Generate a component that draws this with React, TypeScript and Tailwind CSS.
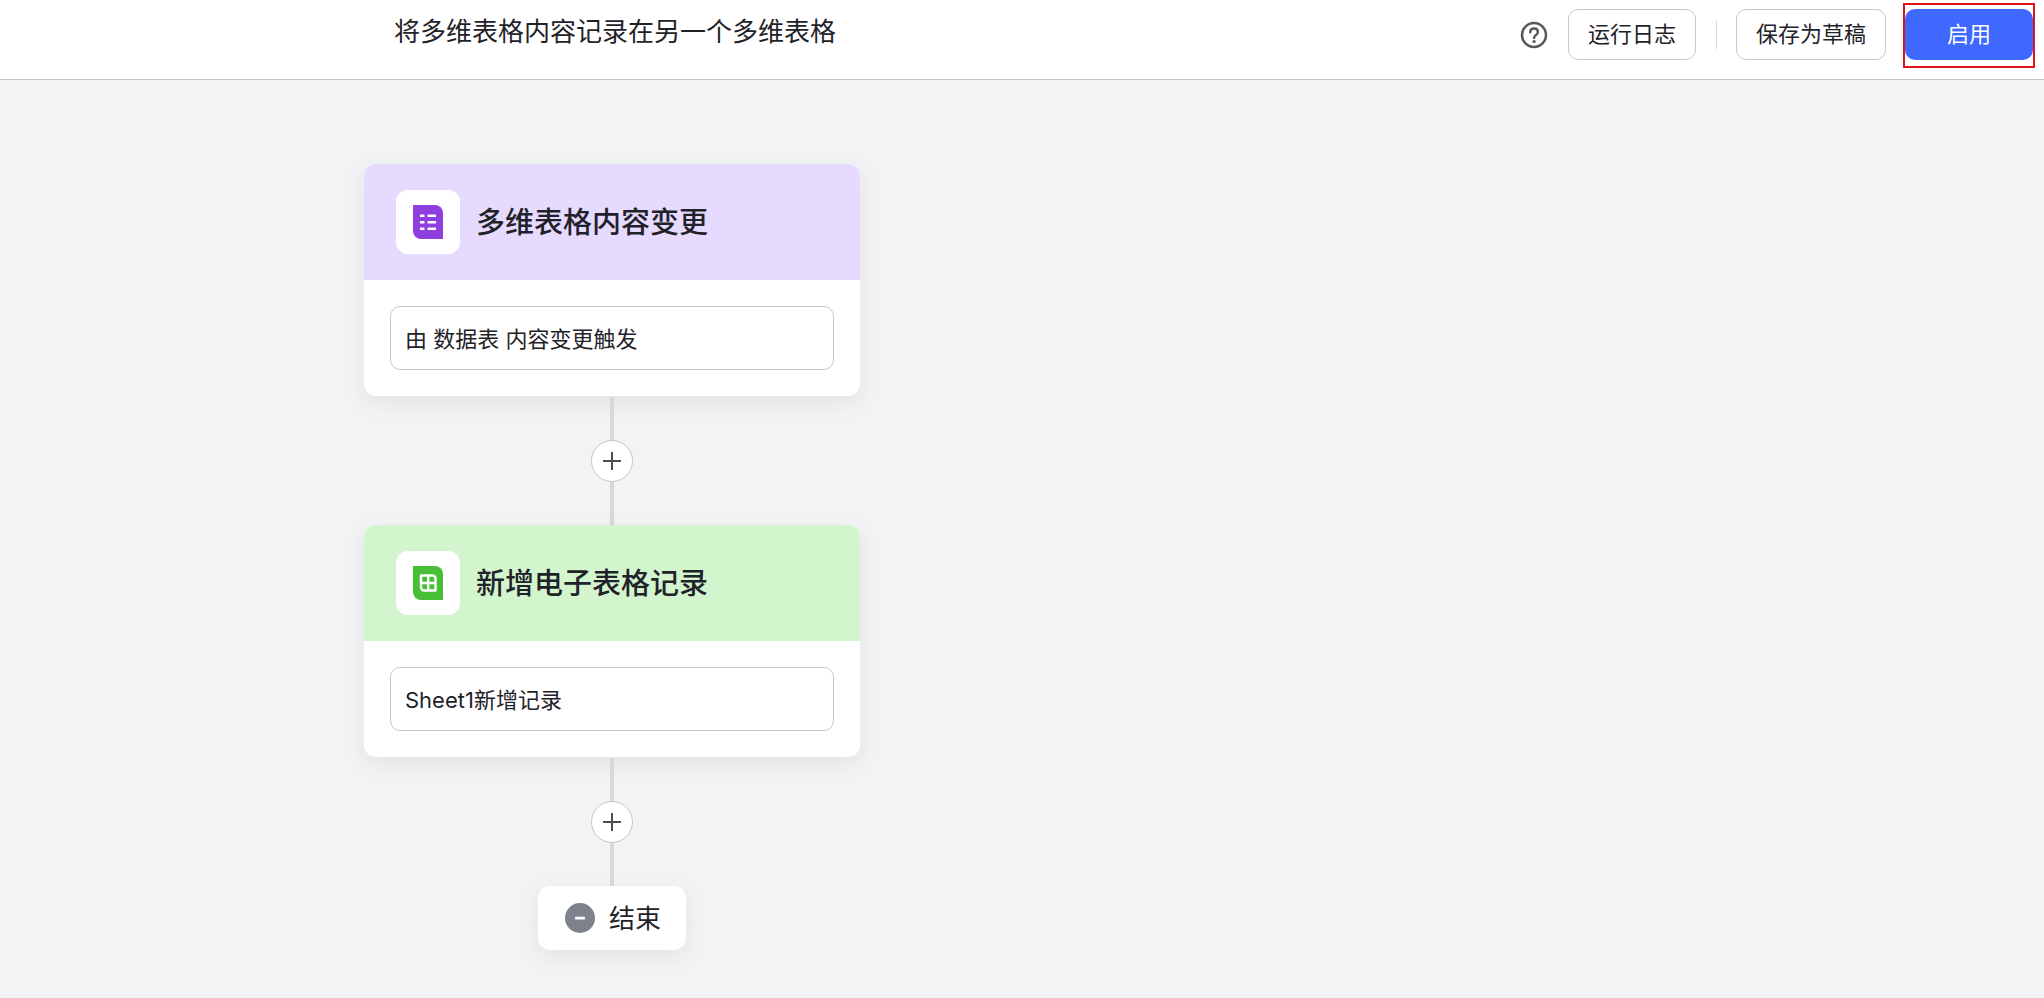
import type { ReactNode } from "react";

type FlowNodeProps = {
  title: string;
  headerClass: string;
  icon: ReactNode;
  value: string;
};

function BitableIcon() {
  return (
    <svg width="30" height="34" viewBox="0 0 30 34" aria-hidden="true">
      <path d="M0 0h22a8 8 0 0 1 8 8v26H8a8 8 0 0 1-8-8z" fill="#8f3fe0" />
      <g fill="#fff">
        <rect x="7" y="9.5" width="4.5" height="2.6" rx="0.6" />
        <rect x="14.5" y="9.5" width="8.5" height="2.6" rx="0.6" />
        <rect x="7" y="16" width="4.5" height="2.6" rx="0.6" />
        <rect x="14.5" y="16" width="8.5" height="2.6" rx="0.6" />
        <rect x="7" y="22.5" width="4.5" height="2.6" rx="0.6" />
        <rect x="14.5" y="22.5" width="8.5" height="2.6" rx="0.6" />
      </g>
    </svg>
  );
}

function SheetIcon() {
  return (
    <svg width="30" height="34" viewBox="0 0 30 34" aria-hidden="true">
      <path d="M0 0h22a8 8 0 0 1 8 8v26H8a8 8 0 0 1-8-8z" fill="#48bf36" />
      <path
        d="M8 9.5h11.5a3 3 0 0 1 3 3v12H11a3 3 0 0 1-3-3zM15.25 9.5v15M8 17h14.5"
        fill="none"
        stroke="#fff"
        strokeWidth="2.4"
        strokeLinejoin="round"
      />
    </svg>
  );
}

function HelpIcon() {
  return (
    <svg width="28" height="28" viewBox="0 0 28 28" fill="none" aria-hidden="true">
      <circle cx="14" cy="14" r="12" stroke="#55585d" strokeWidth="2.5" />
      <path
        d="M10.2 11.2c0-2.2 1.6-3.7 3.9-3.7 2.2 0 3.8 1.4 3.8 3.4 0 1.7-.9 2.5-2.2 3.4-1.1.8-1.6 1.3-1.6 2.6"
        stroke="#55585d"
        strokeWidth="2.4"
        strokeLinecap="round"
      />
      <circle cx="14.1" cy="20.5" r="1.6" fill="#55585d" />
    </svg>
  );
}

function FlowNode({ title, headerClass, icon, value }: FlowNodeProps) {
  return (
    <section className="w-full overflow-hidden rounded-xl bg-white shadow-[0_6px_20px_rgba(31,35,41,0.08)]">
      <header className={`flex h-[116px] items-center gap-4 px-8 ${headerClass}`}>
        <div className="flex h-16 w-16 items-center justify-center rounded-xl bg-white">
          {icon}
        </div>
        <h2 className="pt-0.5 text-[29px] leading-9 font-medium">{title}</h2>
      </header>
      <div className="p-[26px]">
        <input
          type="text"
          aria-label={title}
          defaultValue={value}
          className="block h-16 w-full rounded-[10px] border border-[#c6c7c9] bg-white px-3.5 pb-0.5 text-[22px]"
        />
      </div>
    </section>
  );
}

function Connector() {
  return (
    <div className="flex h-[129px] flex-col items-center pt-px">
      <div className="w-1 flex-1 bg-[#d6d8da]" />
      <button
        type="button"
        aria-label="添加步骤"
        className="flex h-[42px] w-[42px] items-center justify-center rounded-full border border-[#c6c7c9] bg-white"
      >
        <svg width="18" height="18" viewBox="0 0 18 18" aria-hidden="true">
          <path d="M9 0v18M0 9h18" stroke="#4b4d50" strokeWidth="2" />
        </svg>
      </button>
      <div className="w-1 flex-1 bg-[#d6d8da]" />
    </div>
  );
}

export default function App() {
  return (
    <div className="flex min-h-screen flex-col bg-[#f2f3f5] font-[Inter,'Noto_Sans_CJK_SC',sans-serif] text-[#1f2329]">
      <header className="flex h-20 items-start justify-between border-b border-[#c6c7c9] bg-white pr-[11px] pl-[394px]">
        <h1 className="pt-3.5 text-[26px] leading-9">
          将多维表格内容记录在另一个多维表格
        </h1>
        <div className="flex items-center pt-[9px]">
          <button type="button" aria-label="帮助" className="mr-5">
            <HelpIcon />
          </button>
          <button
            type="button"
            className="h-[51px] rounded-[10px] border border-[#c6c7c9] bg-white px-[19px] text-[22px]"
          >
            运行日志
          </button>
          <div className="mr-[19px] ml-5 h-[29px] w-px bg-[#d6d8da]" />
          <button
            type="button"
            className="h-[51px] rounded-[10px] border border-[#c6c7c9] bg-white px-[19px] text-[22px]"
          >
            保存为草稿
          </button>
          <div className="relative ml-[19px]">
            <button
              type="button"
              className="block h-[51px] w-32 rounded-[10px] bg-[#3f68ff] text-[22px] text-white"
            >
              启用
            </button>
            {/* red highlight around the enable button */}
            <div className="pointer-events-none absolute -top-1.5 -right-0.5 -bottom-2 -left-0.5 border-2 border-[#e0131b]" />
          </div>
        </div>
      </header>

      <main className="flex-1 pt-[84px] pb-12 pl-[364px]">
        <div className="flex w-[496px] flex-col items-center">
          <FlowNode
            title="多维表格内容变更"
            headerClass="bg-[#e7daff]"
            icon={<BitableIcon />}
            value="由 数据表 内容变更触发"
          />
          <Connector />
          <FlowNode
            title="新增电子表格记录"
            headerClass="bg-[#d2f5cd]"
            icon={<SheetIcon />}
            value="Sheet1新增记录"
          />
          <Connector />
          <div className="flex h-16 items-center gap-3.5 rounded-xl bg-white pr-[25px] pl-[27px] shadow-[0_6px_20px_rgba(31,35,41,0.08)]">
            <svg width="30" height="30" viewBox="0 0 30 30" aria-hidden="true">
              <circle cx="15" cy="15" r="15" fill="#7d828c" />
              <rect x="10" y="13.7" width="10" height="2.8" rx="0.6" fill="#fff" />
            </svg>
            <span className="pt-0.5 text-[26px] leading-9">结束</span>
          </div>
        </div>
      </main>
    </div>
  );
}
